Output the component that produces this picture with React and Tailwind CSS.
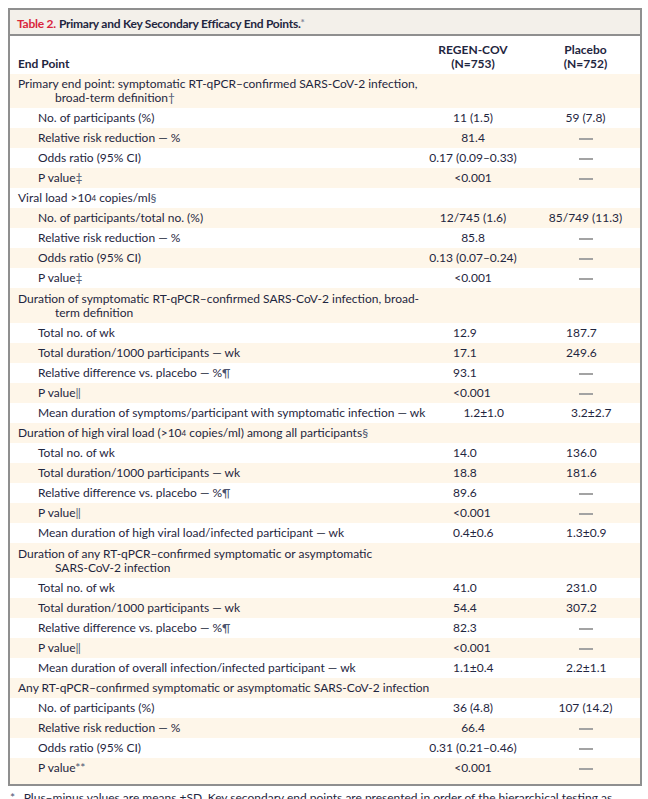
import React from 'react';

const ROWS = [
  { label: 'Primary end point: symptomatic RT-qPCR–confirmed SARS-CoV-2 infection,', cont: 'broad-term definition', mark: '†', first: true },
  { label: 'No. of participants (%)', sub: true, a: '11 (1.5)', b: '59 (7.8)' },
  { label: 'Relative risk reduction — %', sub: true, a: '81.4', b: '—' },
  { label: 'Odds ratio (95% CI)', sub: true, a: '0.17 (0.09–0.33)', b: '—' },
  { label: 'P value', mark: '‡', sub: true, a: '<0.001', b: '—' },
  { label: 'Viral load >10', sup: '4', after: ' copies/ml', mark: '§' },
  { label: 'No. of participants/total no. (%)', sub: true, a: '12/745 (1.6)', b: '85/749 (11.3)' },
  { label: 'Relative risk reduction — %', sub: true, a: '85.8', b: '—' },
  { label: 'Odds ratio (95% CI)', sub: true, a: '0.13 (0.07–0.24)', b: '—' },
  { label: 'P value', mark: '‡', sub: true, a: '<0.001', b: '—' },
  { label: 'Duration of symptomatic RT-qPCR–confirmed SARS-CoV-2 infection, broad-', cont: 'term definition' },
  { label: 'Total no. of wk', sub: true, a: '12.9', b: '187.7', left: true },
  { label: 'Total duration/1000 participants — wk', sub: true, a: '17.1', b: '249.6', left: true },
  { label: 'Relative difference vs. placebo — %', mark: '¶', sub: true, a: '93.1', b: '—', left: true },
  { label: 'P value', mark: '‖', sub: true, a: '<0.001', b: '—', left: true },
  { label: 'Mean duration of symptoms/participant with symptomatic infection — wk', sub: true, a: '1.2±1.0', b: '3.2±2.7', left: true },
  { label: 'Duration of high viral load (>10', sup: '4', after: ' copies/ml) among all participants', mark: '§' },
  { label: 'Total no. of wk', sub: true, a: '14.0', b: '136.0', left: true },
  { label: 'Total duration/1000 participants — wk', sub: true, a: '18.8', b: '181.6', left: true },
  { label: 'Relative difference vs. placebo — %', mark: '¶', sub: true, a: '89.6', b: '—', left: true },
  { label: 'P value', mark: '‖', sub: true, a: '<0.001', b: '—', left: true },
  { label: 'Mean duration of high viral load/infected participant — wk', sub: true, a: '0.4±0.6', b: '1.3±0.9', left: true },
  { label: 'Duration of any RT-qPCR–confirmed symptomatic or asymptomatic', cont: 'SARS-CoV-2 infection' },
  { label: 'Total no. of wk', sub: true, a: '41.0', b: '231.0', left: true },
  { label: 'Total duration/1000 participants — wk', sub: true, a: '54.4', b: '307.2', left: true },
  { label: 'Relative difference vs. placebo — %', mark: '¶', sub: true, a: '82.3', b: '—', left: true },
  { label: 'P value', mark: '‖', sub: true, a: '<0.001', b: '—', left: true },
  { label: 'Mean duration of overall infection/infected participant — wk', sub: true, a: '1.1±0.4', b: '2.2±1.1', left: true },
  { label: 'Any RT-qPCR–confirmed symptomatic or asymptomatic SARS-CoV-2 infection' },
  { label: 'No. of participants (%)', sub: true, a: '36 (4.8)', b: '107 (14.2)' },
  { label: 'Relative risk reduction — %', sub: true, a: '66.4', b: '—' },
  { label: 'Odds ratio (95% CI)', sub: true, a: '0.31 (0.21–0.46)', b: '—' },
  { label: 'P value', mark: '**', sub: true, a: '<0.001', b: '—', last: true },
];

function Value({ v }) {
  if (v === '—') {
    return <span className="inline-block w-[14px] h-[2px] bg-[#a3a3a3] align-middle" />;
  }
  return <span>{v}</span>;
}

function Row({ row, striped }) {
  const double = !!row.cont;
  let h = 'h-[20px]';
  if (double) h = row.first ? 'h-[34px]' : 'h-[35px]';
  if (row.last) h = 'h-[26px] pb-[6px]';
  return (
    <div className={`flex items-center ${h} ${striped ? 'bg-[#fef6e9]' : 'bg-white'}`}>
      <div className={`flex-1 whitespace-nowrap ${row.sub ? 'pl-[28px]' : 'pl-[8px]'} leading-[14px]`}>
        <div>
          {row.label}
          {row.sup && <sup className="text-[8px] relative -top-[1px]">{row.sup}</sup>}
          {row.after}
          {!double && row.mark && <span className="text-[#4b5570]">{row.mark}</span>}
        </div>
        {double && (
          <div className="pl-[37px]">
            {row.cont}
            {row.mark && <span className="text-[#4b5570]">{row.mark}</span>}
          </div>
        )}
      </div>
      <div className={`w-[116px] ${row.left ? 'pl-[38px] text-left' : 'text-center'}`}>
        {row.a && <Value v={row.a} />}
      </div>
      <div className={`w-[109px] ${row.left && row.b !== '—' ? 'pl-[35px] text-left' : 'text-center'}`}>
        {row.b && <Value v={row.b} />}
      </div>
    </div>
  );
}

export default function App() {
  return (
    <div className="bg-white min-h-screen pt-[8px] pl-[8px] pr-[6px] text-[12px] text-[#1f2640] font-['Lato','Liberation_Sans',sans-serif]">
      {/* Table box */}
      <div className="border-2 border-[#8f8f8f]">
        <div className="h-[26px] pt-[4px] bg-[#f3f0ea] border-b-2 border-[#8f8f8f] flex items-center pl-[7px] font-bold text-[12px] tracking-[-0.25px]">
          <span className="text-[#d9263d] mr-[3px]">Table 2.</span>
          <span>Primary and Key Secondary Efficacy End Points.</span>
          <span className="text-[#7d8495] text-[10px] -mt-[4px]">*</span>
        </div>

        {/* Header */}
        <div className="flex items-end h-[38px] pb-[3px] font-bold leading-[14px]">
          <div className="flex-1 pl-[8px]">End Point</div>
          <div className="w-[116px] text-center">
            <div>REGEN-COV</div>
            <div>(N=753)</div>
          </div>
          <div className="w-[109px] text-center">
            <div>Placebo</div>
            <div>(N=752)</div>
          </div>
        </div>

        {ROWS.map((row, i) => (
          <Row key={i} row={row} striped={i % 2 === 0} />
        ))}
      </div>

      {/* Footnote */}
      <div className="flex mt-[5px] pl-[2px] leading-[14px] text-[12px]">
        <span className="w-[18px] text-[#4b5570]">*</span>
        <span>
          Plus–minus values are means ±SD. Key secondary end points are presented in order of the hierarchical testing as
          prespecified in the statistical analysis plan.
        </span>
      </div>
    </div>
  );
}
